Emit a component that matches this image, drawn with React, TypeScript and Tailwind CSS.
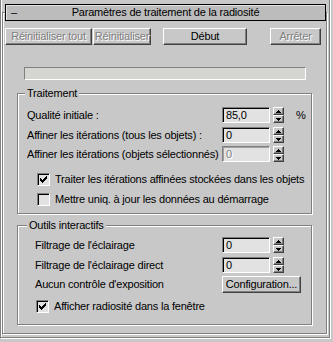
import React from "react";

const raised =
  "border border-t-white border-l-white border-r-[#404040] border-b-[#404040] shadow-[inset_-1px_-1px_0_#808080]";
const etched = "border border-[#808080] shadow-[inset_1px_1px_0_#fff,1px_1px_0_#fff]";
const disabledText = "text-[#808080] [text-shadow:1px_1px_0_#fff]";

function Btn({ label, w, disabled, className = "" }: { label: string; w: string; disabled?: boolean; className?: string }) {
  return (
    <div className={`${w} h-[17px] ${raised} flex items-center justify-center whitespace-nowrap ${className}`}>
      <span className={disabled ? disabledText : ""}>{label}</span>
    </div>
  );
}

function Arrow({ up }: { up?: boolean }) {
  return (
    <svg width="5" height="3" viewBox="0 0 5 3" shapeRendering="crispEdges">
      {up ? <path d="M2 0h1v1h1v1h1v1H0V2h1V1h1z" fill="#000" /> : <path d="M0 0h5v1H4v1H3v1H2V2H1V1H0z" fill="#000" />}
    </svg>
  );
}

function Spinner({ value, disabled }: { value: string; disabled?: boolean }) {
  return (
    <div className="flex items-center">
      <div
        className={`w-[48px] h-[16px] bg-[#e2e2e2] border border-t-[#808080] border-l-[#808080] border-r-white border-b-white flex items-center pl-[3px] ${
          disabled ? "shadow-[inset_1px_1px_0_#a0a0a0]" : "shadow-[inset_1px_1px_0_#000]"
        }`}
      >
        <span className={disabled ? disabledText : ""}>{value}</span>
      </div>
      <div className="ml-[3px] w-[11px] h-[16px] flex flex-col">
        <div className={`h-[8px] ${raised} flex items-center justify-center`}>
          <Arrow up />
        </div>
        <div className={`h-[8px] ${raised} flex items-center justify-center`}>
          <Arrow />
        </div>
      </div>
    </div>
  );
}

const checkPixels = [
  [6, 0], [5, 1], [6, 1], [0, 2], [4, 2], [5, 2], [6, 2], [0, 3], [1, 3], [3, 3], [4, 3], [5, 3],
  [0, 4], [1, 4], [2, 4], [3, 4], [4, 4], [1, 5], [2, 5], [3, 5], [2, 6],
];

function Check({ label, checked, className = "" }: { label: string; checked?: boolean; className?: string }) {
  return (
    <div className={`flex items-center h-[13px] ${className}`}>
      <div className="w-[13px] h-[13px] bg-[#e2e2e2] border border-t-[#808080] border-l-[#808080] border-r-white border-b-white shadow-[inset_1px_1px_0_#000] flex items-center justify-center">
        {checked && (
          <svg width="7" height="7" viewBox="0 0 7 7" shapeRendering="crispEdges">
            {checkPixels.map(([x, y]) => (
              <rect key={`${x}-${y}`} x={x} y={y} width="1" height="1" fill="#000" />
            ))}
          </svg>
        )}
      </div>
      <span className="ml-[5px] whitespace-nowrap">{label}</span>
    </div>
  );
}

function Row({ label, value, disabled, pct, className = "" }: { label: string; value: string; disabled?: boolean; pct?: boolean; className?: string }) {
  return (
    <div className={`flex items-center h-[16px] ${className}`}>
      <span className="whitespace-nowrap flex-1 min-w-0">{label}</span>
      <Spinner value={value} disabled={disabled} />
      <span className={`ml-[12px] w-[15px] ${pct ? "" : "invisible"}`}>%</span>
    </div>
  );
}

export default function App() {
  return (
    <div className="w-[333px] h-[342px] bg-[#c8c8c8] overflow-hidden font-['Liberation_Sans',Arial,sans-serif] text-[11px] leading-[13px] tracking-[-0.2px] text-black">
      <div className="w-[330px] h-[339px] -mt-px border-l border-r border-b border-[#808080] shadow-[inset_1px_0_0_#fff,1px_1px_0_#fff] pl-[1px] pt-[13px]">
        <div className={`w-[325px] h-[322px] ${etched}`}>
          {/* rollout title */}
          <div className="ml-[2px] -mt-[9px] w-[321px] h-[17px] border border-black bg-[#bcbcbc] shadow-[inset_1px_1px_0_#e4e4e4] flex items-center relative">
            <span className="absolute left-[5px] top-[1px]">–</span>
            <span className="flex-1 text-center">Paramètres de traitement de la radiosité</span>
          </div>

          <div className="flex mt-[7px] ml-[2px]">
            <Btn label="Réinitialiser tout" w="w-[87px]" disabled />
            <Btn label="Réinitialiser" w="w-[58px]" disabled className="ml-[1px]" />
            <Btn label="Début" w="w-[84px]" className="ml-[12px]" />
            <Btn label="Arrêter" w="w-[51px]" disabled className="ml-[23px]" />
          </div>

          <div className="mt-[22px] ml-[21px] w-[282px] h-[13px] bg-[#d6d6d0] border border-t-[#808080] border-l-[#808080] border-r-white border-b-white" />

          {/* Traitement */}
          <div className={`mt-[13px] ml-[14px] w-[295px] h-[121px] ${etched} pl-[9px]`}>
            <div className="-mt-[7px] h-[13px] w-fit px-[2px] -ml-[2px] bg-[#c8c8c8]">Traitement</div>
            <Row label="Qualité initiale :" value="85,0" pct className="mt-[7px]" />
            <Row label="Affiner les itérations (tous les objets) :" value="0" className="mt-[4px]" />
            <Row label="Affiner les itérations (objets sélectionnés) :" value="0" disabled className="mt-[3px]" />
            <Check label="Traiter les itérations affinées stockées dans les objets" checked className="mt-[11px] ml-[10px]" />
            <Check label="Mettre uniq. à jour les données au démarrage" className="mt-[7px] ml-[10px]" />
          </div>

          {/* Outils interactifs */}
          <div className={`mt-[11px] ml-[14px] w-[295px] h-[100px] ${etched} pl-[17px]`}>
            <div className="-mt-[7px] -ml-[8px] h-[13px] w-fit px-[2px] bg-[#c8c8c8]">Outils interactifs</div>
            <Row label="Filtrage de l'éclairage" value="0" className="mt-[5px]" />
            <Row label="Filtrage de l'éclairage direct" value="0" className="mt-[4px]" />
            <div className="flex items-center h-[16px] mt-[3px]">
              <span className="flex-1 whitespace-nowrap">Aucun contrôle d'exposition</span>
              <Btn label="Configuration..." w="w-[79px]" className="mr-[10px]" />
            </div>
            <Check label="Afficher radiosité dans la fenêtre" checked className="mt-[8px] ml-[1px]" />
          </div>
        </div>
      </div>
    </div>
  );
}
